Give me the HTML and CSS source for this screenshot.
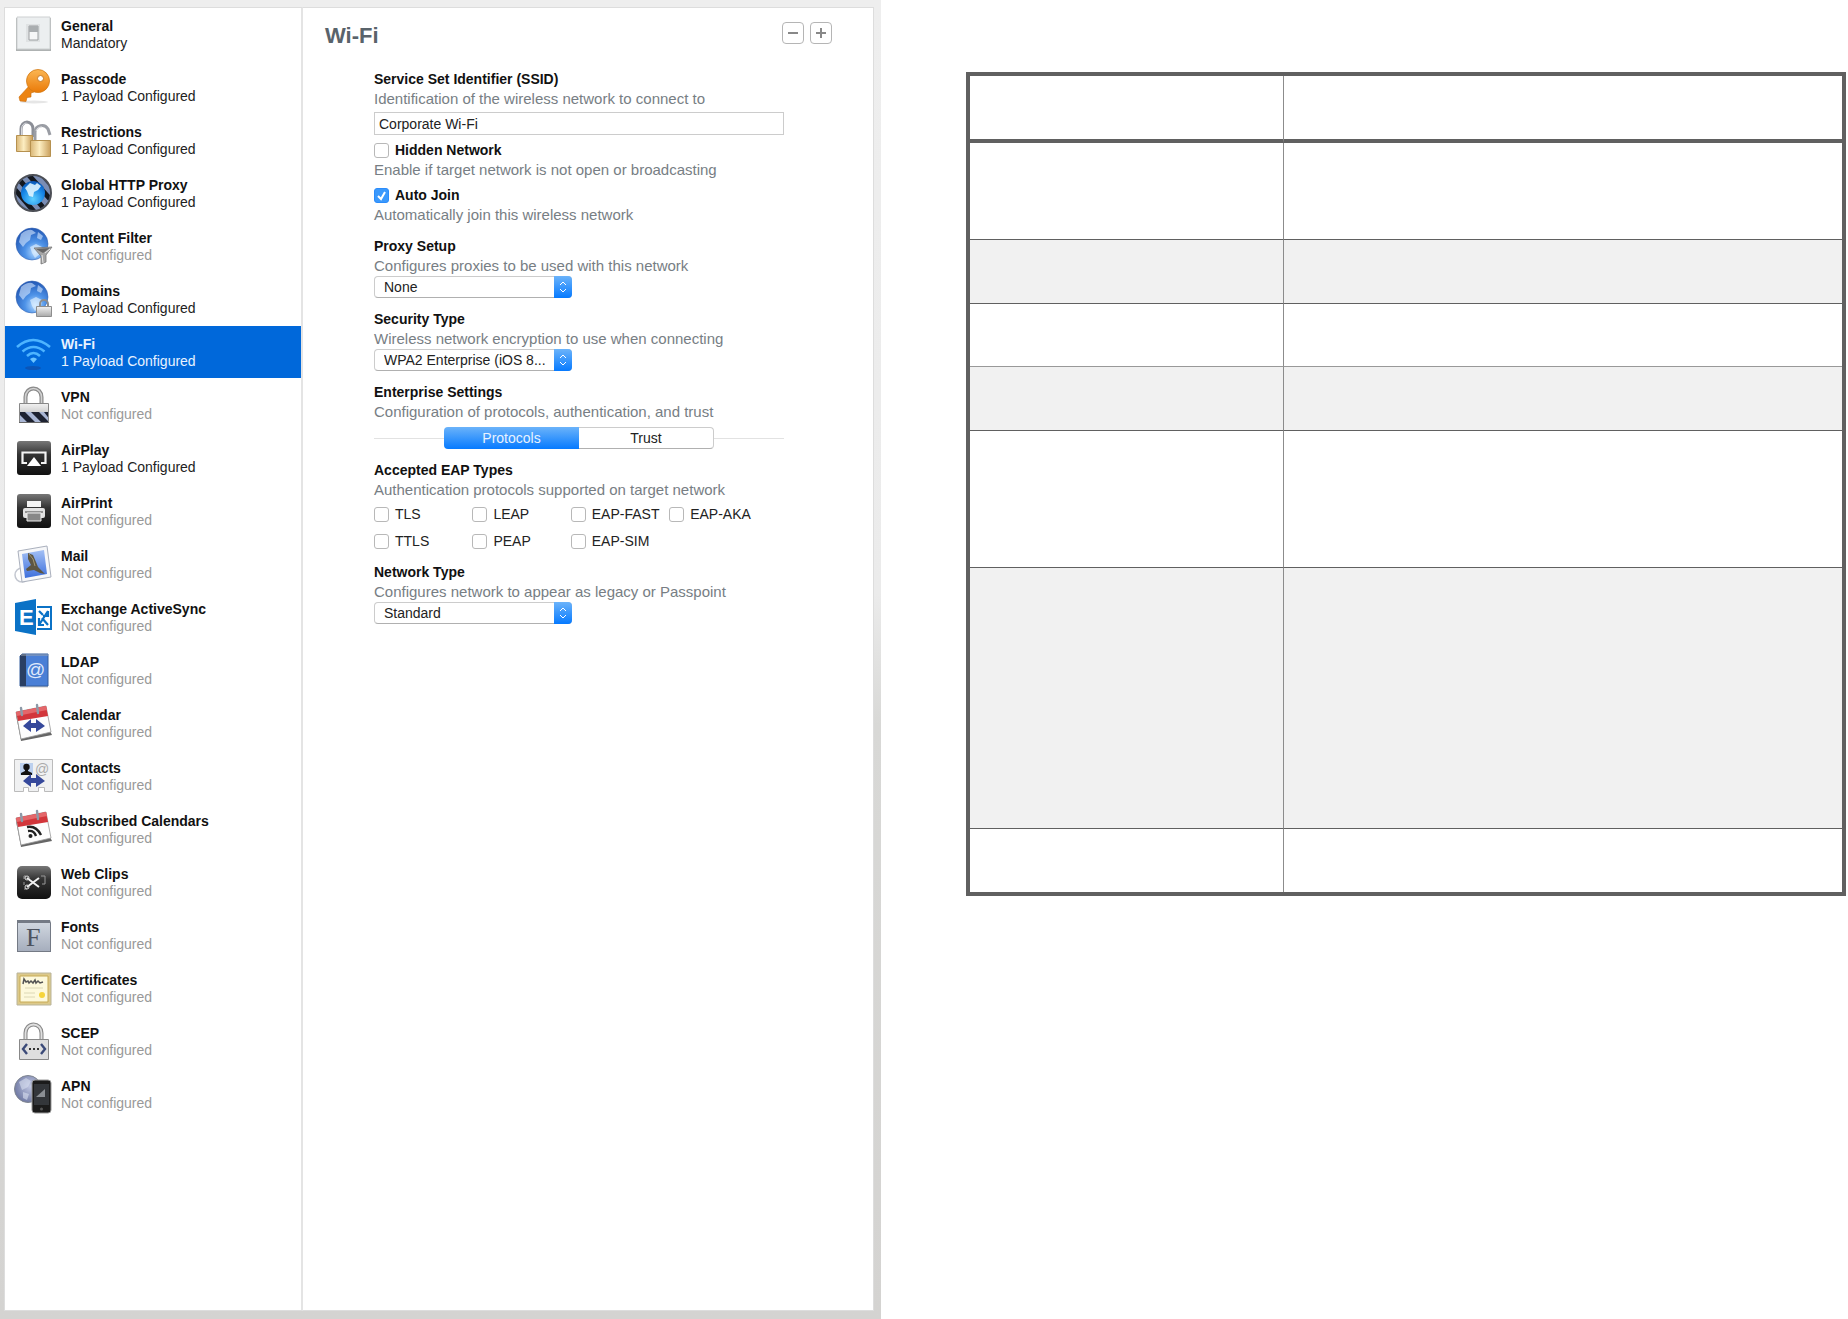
FILE: index.html
```
<!DOCTYPE html>
<html lang="en">
<head>
    <meta charset="utf-8">
    <title>Wi-Fi payload</title>
    <link rel="stylesheet" href="styles.css">
</head>
<body>
<!-- shared gradients and symbols for the payload icons -->
<svg class="defs" width="0" height="0" aria-hidden="true">
    <defs>
        <linearGradient id="g-dark" x1="0" y1="0" x2="0" y2="1"><stop offset="0" stop-color="#777"/><stop offset=".4" stop-color="#333"/><stop offset="1" stop-color="#111"/></linearGradient>
        <linearGradient id="g-steel" x1="0" y1="0" x2="0" y2="1"><stop offset="0" stop-color="#f2f2f2"/><stop offset="1" stop-color="#a9a9a9"/></linearGradient>
        <linearGradient id="g-gold" x1="0" y1="0" x2="1" y2="0"><stop offset="0" stop-color="#d9b676"/><stop offset=".45" stop-color="#fdeec2"/><stop offset="1" stop-color="#c99f5c"/></linearGradient>
        <linearGradient id="g-key" x1="0" y1="0" x2="0" y2="1"><stop offset="0" stop-color="#fbb653"/><stop offset="1" stop-color="#ea7a08"/></linearGradient>
        <linearGradient id="g-font" x1="0" y1="0" x2="0" y2="1"><stop offset="0" stop-color="#d0d6df"/><stop offset="1" stop-color="#a6aebd"/></linearGradient>
        <linearGradient id="g-sky" x1="0" y1="0" x2="0" y2="1"><stop offset="0" stop-color="#a3c0f5"/><stop offset="1" stop-color="#3d6fdc"/></linearGradient>
        <radialGradient id="g-globe" cx=".6" cy=".75" r=".8"><stop offset="0" stop-color="#b8dcff"/><stop offset=".4" stop-color="#4e93e8"/><stop offset="1" stop-color="#1b4fae"/></radialGradient>
        <radialGradient id="g-proxy" cx=".5" cy=".75" r=".8"><stop offset="0" stop-color="#5fd0ff"/><stop offset=".6" stop-color="#1584e6"/><stop offset="1" stop-color="#0a4ba8"/></radialGradient>
        <radialGradient id="g-moon" cx=".6" cy=".4" r=".7"><stop offset="0" stop-color="#c2c9e4"/><stop offset="1" stop-color="#66709c"/></radialGradient>
        <clipPath id="c-ring"><circle cx="20" cy="20" r="17"/></clipPath>
        <clipPath id="c-vpn"><path d="M7 27h28v10H7z"/></clipPath>
    </defs>
    <symbol id="globe" viewBox="0 0 40 40">
        <circle cx="19" cy="18" r="16" fill="url(#g-globe)" stroke="#3a68b4" stroke-width=".6"/>
        <path d="M8 8q6-5 11-4l4 3-5 2-1 5-4 3-3 4-4-5z M25 6l5 4-2 4-4-2z" fill="#d5e8ff" opacity=".6"/>
        <path d="M17 21l6-3 6 3-1 6-6 5-3-5z" fill="#e9f5ff" opacity=".6"/>
    </symbol>
    <symbol id="calendar" viewBox="0 0 40 40">
        <path d="M3 12l5 26 31-6-2-4z" fill="#666"/>
        <path d="M3 9l30-6 5 26-30 7z" fill="#fdfdfd" stroke="#999" stroke-width=".8"/>
        <path d="M3 9l30-6 2 10-30 5z" fill="#d2363b"/>
        <path d="M3 9l30-6 1 4-30 6z" fill="#e4676a"/>
        <path d="M8 5l1 7M24 2l1 8" stroke="#8d9aa8" stroke-width="2.4" stroke-linecap="round"/>
    </symbol>
    <symbol id="arrows" viewBox="0 0 40 40">
        <path d="M10 22l8-7v4h5v-4l9 7-9 6v-4h-5v4z" fill="#35489b"/>
    </symbol>
</svg>

<div class="page">
    <div class="window">
        <nav class="sidebar" aria-label="Payloads">
            <a class="payload on" href="#general">
                <svg class="icon" viewBox="0 0 40 40"><path d="M3 4h35v33H3z" fill="#aeb2b2"/><path d="M4 3h33v32H4z" fill="#eceff0" stroke="#cdd0d1"/><path d="M13 10h14v18H13z" fill="#dfe2e3"/><path d="M16 12h9v14h-9z" fill="#f6f7f7" stroke="#9c9fa1"/><path d="M16 12h9v6h-9z" fill="#aaaeb0"/></svg>
                <span class="text"><b>General</b><span>Mandatory</span></span>
            </a>
            <a class="payload on" href="#passcode">
                <svg class="icon" viewBox="0 0 40 40"><ellipse cx="21" cy="35" rx="14" ry="1.5" fill="#e6e6e6"/><path d="M17 18L6 30l1 4 6 .5 1-4 4-.5v-4l3-1 3-4z" fill="#ec8413" stroke="#c96c0a" stroke-width=".6"/><circle cx="25" cy="14" r="11.5" fill="url(#g-key)" stroke="#d37a14" stroke-width=".8"/><circle cx="27.500" cy="11.500" r="3" fill="#fff" stroke="#c87a22"/></svg>
                <span class="text"><b>Passcode</b><span>1 Payload Configured</span></span>
            </a>
            <a class="payload on" href="#restrictions">
                <svg class="icon" viewBox="0 0 40 40"><path d="M8 17V9a6 7 0 0 1 12 0v8" fill="none" stroke="#8b8e96" stroke-width="3"/><path d="M8.500 16V9a5 6 0 0 1 5-6" fill="none" stroke="#d6d8dd"/><path d="M22 21v-9a7 7 0 0 1 13-3l2 6" fill="none" stroke="#9a9da4" stroke-width="3"/><path d="M23 11a6 6 0 0 1 6-4" fill="none" stroke="#e4e5e8"/><path d="M3.500 15.500h16v16h-16z" fill="url(#g-gold)" stroke="#b6914f"/><path d="M17.500 20.500h20v16h-20z" fill="url(#g-gold)" stroke="#b6914f"/></svg>
                <span class="text"><b>Restrictions</b><span>1 Payload Configured</span></span>
            </a>
            <a class="payload on" href="#proxy">
                <svg class="icon" viewBox="0 0 40 40"><circle cx="20" cy="20" r="18" fill="#7a8db4" stroke="#4c4f56" stroke-width="2"/><g clip-path="url(#c-ring)" stroke="#14181f" stroke-width="5"><path d="M-2 12L24 42M4 4l36 42M14 0l30 34M26-2l16 18"/></g><circle cx="20" cy="20" r="12" fill="url(#g-proxy)"/><path d="M12 15l5-5 5 2 2-2 4 3-3 4-4 2-1 5-4-1-2-5z" fill="#dff4ff" opacity=".9"/></svg>
                <span class="text"><b>Global HTTP Proxy</b><span>1 Payload Configured</span></span>
            </a>
            <a class="payload" href="#filter">
                <svg class="icon" viewBox="0 0 40 40"><use href="#globe"/><path d="M21 22l18-1-6 8v7l-5 2v-8z" fill="#a5a5a5" stroke="#777" stroke-width=".8"/><path d="M23 23l14-1-7 5z" fill="#666"/><path d="M29 29l1 8M32 27l5-4" stroke="#e5e5e5"/></svg>
                <span class="text"><b>Content Filter</b><span>Not configured</span></span>
            </a>
            <a class="payload on" href="#domains">
                <svg class="icon" viewBox="0 0 40 40"><use href="#globe"/><path d="M27 28v-3a4 4 0 0 1 8 0v3" fill="none" stroke="#8d8d8d" stroke-width="2"/><path d="M23.500 27.500h15v10h-15z" fill="url(#g-steel)" stroke="#8d8d8d"/></svg>
                <span class="text"><b>Domains</b><span>1 Payload Configured</span></span>
            </a>
            <a class="payload selected" href="#wifi" aria-current="page">
                <svg class="icon" viewBox="0 0 40 40"><ellipse cx="20" cy="36" rx="8" ry="2" fill="#0a55b8"/><g fill="none" stroke="#4db4ff" stroke-width="2.600"><path d="M4 15q16-14 33 0"/><path d="M9.500 19.500q11-9 22 0"/><path d="M14 24q6.500-6 13 0"/></g><path d="M17 27q3.500-3 7 0l-3.500 4z" fill="#6cc4ff"/></svg>
                <span class="text"><b>Wi-Fi</b><span>1 Payload Configured</span></span>
            </a>
            <a class="payload" href="#vpn">
                <svg class="icon" viewBox="0 0 40 40"><path d="M12.500 19v-7a8 8.500 0 0 1 16 0v7" fill="none" stroke="#8a8a8a" stroke-width="4"/><path d="M12.500 19v-7a8 8.500 0 0 1 16 0v7" fill="none" stroke="#d2d2d2" stroke-width="1.600"/><path d="M6.500 18.500h29v19h-29z" fill="url(#g-steel)" stroke="#888"/><g clip-path="url(#c-vpn)"><path d="M7 27h28v10H7z" fill="#a9b6d4"/><path d="M4 27h8l10 10h-8zM18 27h8l10 10h-8zM31 27h6v8z" fill="#1d2231"/></g><path d="M6 37.500h30" stroke="#666"/></svg>
                <span class="text"><b>VPN</b><span>Not configured</span></span>
            </a>
            <a class="payload on" href="#airplay">
                <svg class="icon" viewBox="0 0 40 40"><rect x="4" y="3" width="34" height="34" rx="3" fill="url(#g-dark)"/><path d="M14 25H9.500V14.500h23V25H28" fill="none" stroke="#f4f4f4" stroke-width="2.200"/><path d="M21 19l7 9H14z" fill="#fff"/></svg>
                <span class="text"><b>AirPlay</b><span>1 Payload Configured</span></span>
            </a>
            <a class="payload" href="#airprint">
                <svg class="icon" viewBox="0 0 40 40"><rect x="4" y="3" width="34" height="34" rx="3" fill="url(#g-dark)"/><path d="M14 10h14v6H14z" fill="#f3f3f3"/><rect x="10" y="17" width="22" height="10" rx="2" fill="#e2e2e2"/><path d="M12 21h18" stroke="#444"/><path d="M14 22h14v8H14z" fill="#888" stroke="#eee"/></svg>
                <span class="text"><b>AirPrint</b><span>Not configured</span></span>
            </a>
            <a class="payload" href="#mail">
                <svg class="icon" viewBox="0 0 40 40"><circle cx="9" cy="31" r="7" fill="none" stroke="#c3c7d0" stroke-width="1.500"/><path d="M5 7l29-5 4 31-29 5z" fill="#f6f7f9" stroke="#aab0bd"/><path d="M9 10l22-4 3 24-22 4z" fill="url(#g-sky)"/><path d="M15 9l5 2 3 7 2 5 7 7-5-1-6-3-7 1-1-2 5-4-3-6z" fill="#5d5643"/><path d="M16 10l4 5 2 7" fill="none" stroke="#a39773"/></svg>
                <span class="text"><b>Mail</b><span>Not configured</span></span>
            </a>
            <a class="payload" href="#exchange">
                <svg class="icon" viewBox="0 0 40 40"><path d="M24 10h14v22H24" fill="#fff" stroke="#0b72c6" stroke-width="2"/><path d="M26 14l4 4m5-4l-9 14m3-7l6 7m0-14v5h-5m-4 2v7h5" fill="none" stroke="#0b72c6" stroke-width="2.200"/><path d="M2 6l21-4v36L2 34z" fill="#0b72c6"/><text class="glyph-e" x="6" y="28">E</text></svg>
                <span class="text"><b>Exchange ActiveSync</b><span>Not configured</span></span>
            </a>
            <a class="payload" href="#ldap">
                <svg class="icon" viewBox="0 0 40 40"><path d="M7 36h28v1.500H7z" fill="#c9c9c9"/><path d="M7 6l2-2h26v32H7z" fill="#4a7fd6" stroke="#345f9f"/><path d="M7 6l2-2h4v32H7z" fill="#2a3f63"/><path d="M8 5h27" stroke="#9aa4b0"/><text class="glyph-at" x="13" y="26">@</text></svg>
                <span class="text"><b>LDAP</b><span>Not configured</span></span>
            </a>
            <a class="payload" href="#calendar-sync">
                <svg class="icon" viewBox="0 0 40 40"><use href="#calendar"/><use href="#arrows" y="1"/></svg>
                <span class="text"><b>Calendar</b><span>Not configured</span></span>
            </a>
            <a class="payload" href="#contacts">
                <svg class="icon" viewBox="0 0 40 40"><path d="M1.500 3.500h38v32h-8v-4h-6v4h-10v-4h-5v4h-9z" fill="#f0f1f2" stroke="#bbb"/><path d="M7 7h13v12H7z" fill="#bcd0ee"/><circle cx="13.500" cy="11" r="3.200" fill="#111"/><path d="M12 13h3v2l4 2v2H8v-2l4-2z" fill="#111"/><text class="glyph-at-small" x="22" y="18">@</text><use href="#arrows" y="3"/></svg>
                <span class="text"><b>Contacts</b><span>Not configured</span></span>
            </a>
            <a class="payload" href="#subscribed">
                <svg class="icon" viewBox="0 0 40 40"><use href="#calendar"/><g fill="none" stroke="#222" stroke-width="2.400"><path d="M14 18q9-2 14 8"/><path d="M15 22q6-1 8 5"/></g><circle cx="17.500" cy="27" r="2" fill="#222"/></svg>
                <span class="text"><b>Subscribed Calendars</b><span>Not configured</span></span>
            </a>
            <a class="payload" href="#webclips">
                <svg class="icon" viewBox="0 0 40 40"><rect x="4" y="4" width="34" height="33" rx="5" fill="url(#g-dark)"/><path d="M13 14h-2v3M11 20v3M28 14h4v8h-3M11 27h3" fill="none" stroke="#999"/><path d="M14 16l12 9M14 25l12-9" stroke="#f2f2f2" stroke-width="2"/><circle cx="14" cy="16" r="2" fill="none" stroke="#ddd"/><circle cx="14" cy="25" r="2" fill="none" stroke="#ddd"/></svg>
                <span class="text"><b>Web Clips</b><span>Not configured</span></span>
            </a>
            <a class="payload" href="#fonts">
                <svg class="icon" viewBox="0 0 40 40"><path d="M4 5h33l1 3v29H4z" fill="#747a85"/><path d="M5 8h32v28H5z" fill="url(#g-font)"/><text class="glyph-f" x="13" y="31">F</text></svg>
                <span class="text"><b>Fonts</b><span>Not configured</span></span>
            </a>
            <a class="payload" href="#certificates">
                <svg class="icon" viewBox="0 0 40 40"><path d="M4 5h34v32H4z" fill="#dcc98a" stroke="#b9b49c"/><path d="M7 8h28v26H7z" fill="#fdf9dc" stroke="#c7aa55"/><path d="M10 16l1-5 2 3 2-1 1 2 2-2 2 2 2-3 1 3 2-2 2 2 3-1" fill="none" stroke="#555" stroke-width="1.500"/><path d="M12 20h18M11 25h11M11 29h11" stroke="#dcd8b5"/><circle cx="29" cy="27" r="3" fill="#f6d43a"/></svg>
                <span class="text"><b>Certificates</b><span>Not configured</span></span>
            </a>
            <a class="payload" href="#scep">
                <svg class="icon" viewBox="0 0 40 40"><path d="M12.500 19v-7a8 8.500 0 0 1 16 0v7" fill="none" stroke="#8a8a8a" stroke-width="4"/><path d="M12.500 19v-7a8 8.500 0 0 1 16 0v7" fill="none" stroke="#e0e0e0" stroke-width="1.800"/><path d="M6.500 18.500h29v20h-29z" fill="#dedede" stroke="#888"/><path d="M14 23l-4 5 4 5M28 23l4 5-4 5" fill="none" stroke="#3b4a78" stroke-width="2.400"/><path d="M16 28h2m2 0h2m2 0h2" stroke="#333" stroke-width="2"/></svg>
                <span class="text"><b>SCEP</b><span>Not configured</span></span>
            </a>
            <a class="payload" href="#apn">
                <svg class="icon" viewBox="0 0 40 40"><circle cx="15" cy="15" r="13.500" fill="url(#g-moon)" stroke="#808690"/><path d="M6 8l7-4 5 3-3 6-6 3zM10 18l6 2-2 6-4-2z" fill="#d9dff0" opacity=".6"/><rect x="19" y="6" width="19" height="33" rx="3" fill="#1b1b1b" stroke="#999"/><path d="M21 10h15v21H21z" fill="#33363a"/><path d="M23 23l9-8v8z" fill="#8b8f94"/><circle cx="28.500" cy="35" r="1.500" fill="#555"/></svg>
                <span class="text"><b>APN</b><span>Not configured</span></span>
            </a>
        </nav>

        <main class="main">
            <header class="heading">
                <h1>Wi-Fi</h1>
                <div class="heading-buttons">
                    <button type="button" aria-label="Remove payload"><svg viewBox="0 0 12 12"><path d="M1 6h10"/></svg></button>
                    <button type="button" aria-label="Add payload"><svg viewBox="0 0 12 12"><path d="M1 6h10M6 1v10"/></svg></button>
                </div>
            </header>

            <form class="fields">
                <div class="field">
                    <label class="title" for="ssid">Service Set Identifier (SSID)</label>
                    <p>Identification of the wireless network to connect to</p>
                    <input type="text" id="ssid" value="Corporate Wi-Fi">
                </div>
                <div class="field -check">
                    <label class="check title"><input type="checkbox">Hidden Network</label>
                    <p>Enable if target network is not open or broadcasting</p>
                </div>
                <div class="field -check">
                    <label class="check title"><input type="checkbox" checked>Auto Join</label>
                    <p>Automatically join this wireless network</p>
                </div>
                <div class="field">
                    <label class="title" for="proxy">Proxy Setup</label>
                    <p>Configures proxies to be used with this network</p>
                    <div class="select">
                        <select id="proxy"><option>None</option></select>
                        <svg viewBox="0 0 18 22"><path d="M6 9l3-3 3 3M6 13l3 3 3-3"/></svg>
                    </div>
                </div>
                <div class="field">
                    <label class="title" for="security">Security Type</label>
                    <p>Wireless network encryption to use when connecting</p>
                    <div class="select">
                        <select id="security"><option>WPA2 Enterprise (iOS 8...</option></select>
                        <svg viewBox="0 0 18 22"><path d="M6 9l3-3 3 3M6 13l3 3 3-3"/></svg>
                    </div>
                </div>
                <div class="field">
                    <h2 class="title">Enterprise Settings</h2>
                    <p>Configuration of protocols, authentication, and trust</p>
                    <div class="tabs" role="tablist">
                        <button type="button" role="tab" aria-selected="true">Protocols</button>
                        <button type="button" role="tab" aria-selected="false">Trust</button>
                    </div>
                </div>
                <div class="field">
                    <h2 class="title">Accepted EAP Types</h2>
                    <p>Authentication protocols supported on target network</p>
                    <div class="eap">
                        <label class="check"><input type="checkbox">TLS</label>
                        <label class="check"><input type="checkbox">LEAP</label>
                        <label class="check"><input type="checkbox">EAP-FAST</label>
                        <label class="check"><input type="checkbox">EAP-AKA</label>
                        <label class="check"><input type="checkbox">TTLS</label>
                        <label class="check"><input type="checkbox">PEAP</label>
                        <label class="check"><input type="checkbox">EAP-SIM</label>
                    </div>
                </div>
                <div class="field">
                    <label class="title" for="network">Network Type</label>
                    <p>Configures network to appear as legacy or Passpoint</p>
                    <div class="select">
                        <select id="network"><option>Standard</option></select>
                        <svg viewBox="0 0 18 22"><path d="M6 9l3-3 3 3M6 13l3 3 3-3"/></svg>
                    </div>
                </div>
            </form>
        </main>
    </div>

    <div class="notes">
        <table>
            <thead>
            <tr><th></th><th></th></tr>
            </thead>
            <tbody>
            <tr class="medium"><td></td><td></td></tr>
            <tr><td></td><td></td></tr>
            <tr class="light"><td></td><td></td></tr>
            <tr><td></td><td></td></tr>
            <tr class="large"><td></td><td></td></tr>
            <tr class="xlarge"><td></td><td></td></tr>
            <tr><td></td><td></td></tr>
            </tbody>
        </table>
    </div>
</div>
</body>
</html>
```

FILE: styles.css
```
* {
    box-sizing: border-box;
    margin: 0;
    padding: 0;
}
body {
    font-family: "Liberation Sans", Arial, sans-serif;
    font-size: 14px;
    color: #222;
    background: #fff;
}
button, input, select {
    font: inherit;
    color: inherit;
}
.defs {
    position: absolute;
}
.page {
    display: grid;
    grid-template-columns: 881fr 967fr;
    min-height: 100vh;
}

/* window */
.window {
    display: flex;
    padding: 7px 7px 8px 4px;
    background: linear-gradient(#eee 0%, #ebebeb 45%, #d8d8d6 55%, #d4d3d1 100%);
}
.sidebar {
    flex: 0 0 299px;
    display: flex;
    flex-direction: column;
    gap: 1px;
    background: #fff;
    border: 1px solid #ddd;
    border-right: 2px solid #e4e4e4;
}
.payload {
    display: flex;
    align-items: center;
    gap: 8px;
    height: 52px;
    padding-left: 8px;
    line-height: 17px;
    color: #999;
    text-decoration: none;
}
.payload b {
    color: #111;
}
.payload.on {
    color: #222;
}
.payload.selected, .payload.selected b {
    color: #e8f2ff;
}
.payload.selected {
    background: #0068da;
}
.icon {
    flex: none;
    width: 40px;
    height: 40px;
}
.text {
    display: flex;
    flex-direction: column;
    padding-top: 2px;
}
.glyph-e {
    font-size: 22px;
    font-weight: bold;
    fill: #fff;
}
.glyph-at {
    font-size: 19px;
    fill: #dfe9fb;
}
.glyph-at-small {
    font-size: 14px;
    fill: #aaa;
}
.glyph-f {
    font-family: "Liberation Serif", serif;
    font-size: 26px;
    fill: #4c525e;
}

/* payload settings */
.main {
    flex: 1;
    background: #fff;
    border: solid #ddd;
    border-width: 1px 1px 1px 0;
}
.heading {
    display: flex;
    justify-content: space-between;
    align-items: flex-start;
    padding: 14px 41px 0 22px;
}
h1 {
    font-size: 22px;
    line-height: 28px;
    color: #59636b;
}
.heading-buttons {
    display: flex;
    gap: 6px;
}
.heading-buttons button {
    display: flex;
    align-items: center;
    justify-content: center;
    width: 22px;
    height: 22px;
    background: #fff;
    border: 1px solid #b5b5b5;
    border-radius: 4px;
}
.heading-buttons svg {
    width: 12px;
    height: 12px;
    stroke: #888;
    stroke-width: 2px;
}
.fields {
    display: flex;
    flex-direction: column;
    gap: 12px;
    padding: 20px 89px 20px 71px;
}
.field.-check {
    margin-top: -6px;
}
.title {
    display: block;
    font-size: 14px;
    font-weight: bold;
    line-height: 19px;
    color: #111;
}
.field p {
    font-size: 15px;
    line-height: 20px;
    color: #777e84;
}
input[type="text"] {
    display: block;
    width: 100%;
    height: 23px;
    margin-top: 3px;
    padding: 0 4px;
    border: 1px solid #ccc;
    background: #fff;
}
.check {
    display: flex;
    align-items: center;
    gap: 6px;
    line-height: 19px;
    white-space: nowrap;
}
input[type="checkbox"] {
    appearance: none;
    flex: none;
    width: 15px;
    height: 15px;
    border: 1px solid #b8b8b8;
    border-radius: 3px;
    background: #fff;
}
input[type="checkbox"]:checked {
    border-color: #2b8cfb;
    background: #3b99fc url("data:image/svg+xml,%3Csvg xmlns='http://www.w3.org/2000/svg' viewBox='0 0 13 13'%3E%3Cpath d='M3 7l3 3 4-7' fill='none' stroke='white' stroke-width='2'/%3E%3C/svg%3E") center no-repeat;
}
.select {
    position: relative;
    width: 198px;
    height: 22px;
}
.select select {
    appearance: none;
    display: block;
    width: 100%;
    height: 22px;
    padding: 0 20px 0 9px;
    border: 1px solid #ccc;
    border-bottom-color: #b0b0b0;
    border-radius: 4px;
    background: #fff;
}
/* blue arrows drawn over the right end of the select */
.select svg {
    position: absolute;
    top: 0;
    right: 0;
    width: 18px;
    height: 22px;
    border-radius: 0 4px 4px 0;
    background: linear-gradient(#6bb3fa, #067aff);
    fill: none;
    stroke: #fff;
    stroke-width: 1px;
    pointer-events: none;
}
.tabs {
    display: flex;
    align-items: center;
    margin-top: 5px;
}
.tabs::before, .tabs::after {
    content: "";
    flex: 1;
    border-top: 1px solid #e2e2e2;
}
.tabs button {
    width: 135px;
    height: 22px;
    border: 1px solid #ccc;
    border-bottom-color: #b0b0b0;
    border-left: 0;
    border-radius: 0 4px 4px 0;
    background: #fff;
}
.tabs button[aria-selected="true"] {
    border: 0;
    border-radius: 4px 0 0 4px;
    background: linear-gradient(#6bb3fa, #067aff);
    color: #e8f2ff;
}
.eap {
    display: grid;
    grid-template-columns: repeat(4, 24%);
    gap: 8px 0;
    margin-top: 5px;
}

/* empty table next to the window */
.notes {
    padding: 72px 2px 0 85px;
}
table {
    width: 100%;
    border: 4px solid #606060;
    border-spacing: 0;
    table-layout: fixed;
}
th, td {
    height: 64px;
    border-bottom: 1px solid #606060;
}
th {
    height: 67px;
    border-bottom-width: 4px;
}
th:first-child, td:first-child {
    width: 36%;
    border-right: 1px solid #8c8c8c;
}
tbody tr:nth-child(even) {
    background: #f1f1f1;
}
.medium td {
    height: 97px;
}
.light td {
    height: 63px;
    border-bottom-color: #999;
}
.large td {
    height: 137px;
}
.xlarge td {
    height: 261px;
}
tbody tr:last-child td {
    height: 63px;
    border-bottom: 0;
}
```
